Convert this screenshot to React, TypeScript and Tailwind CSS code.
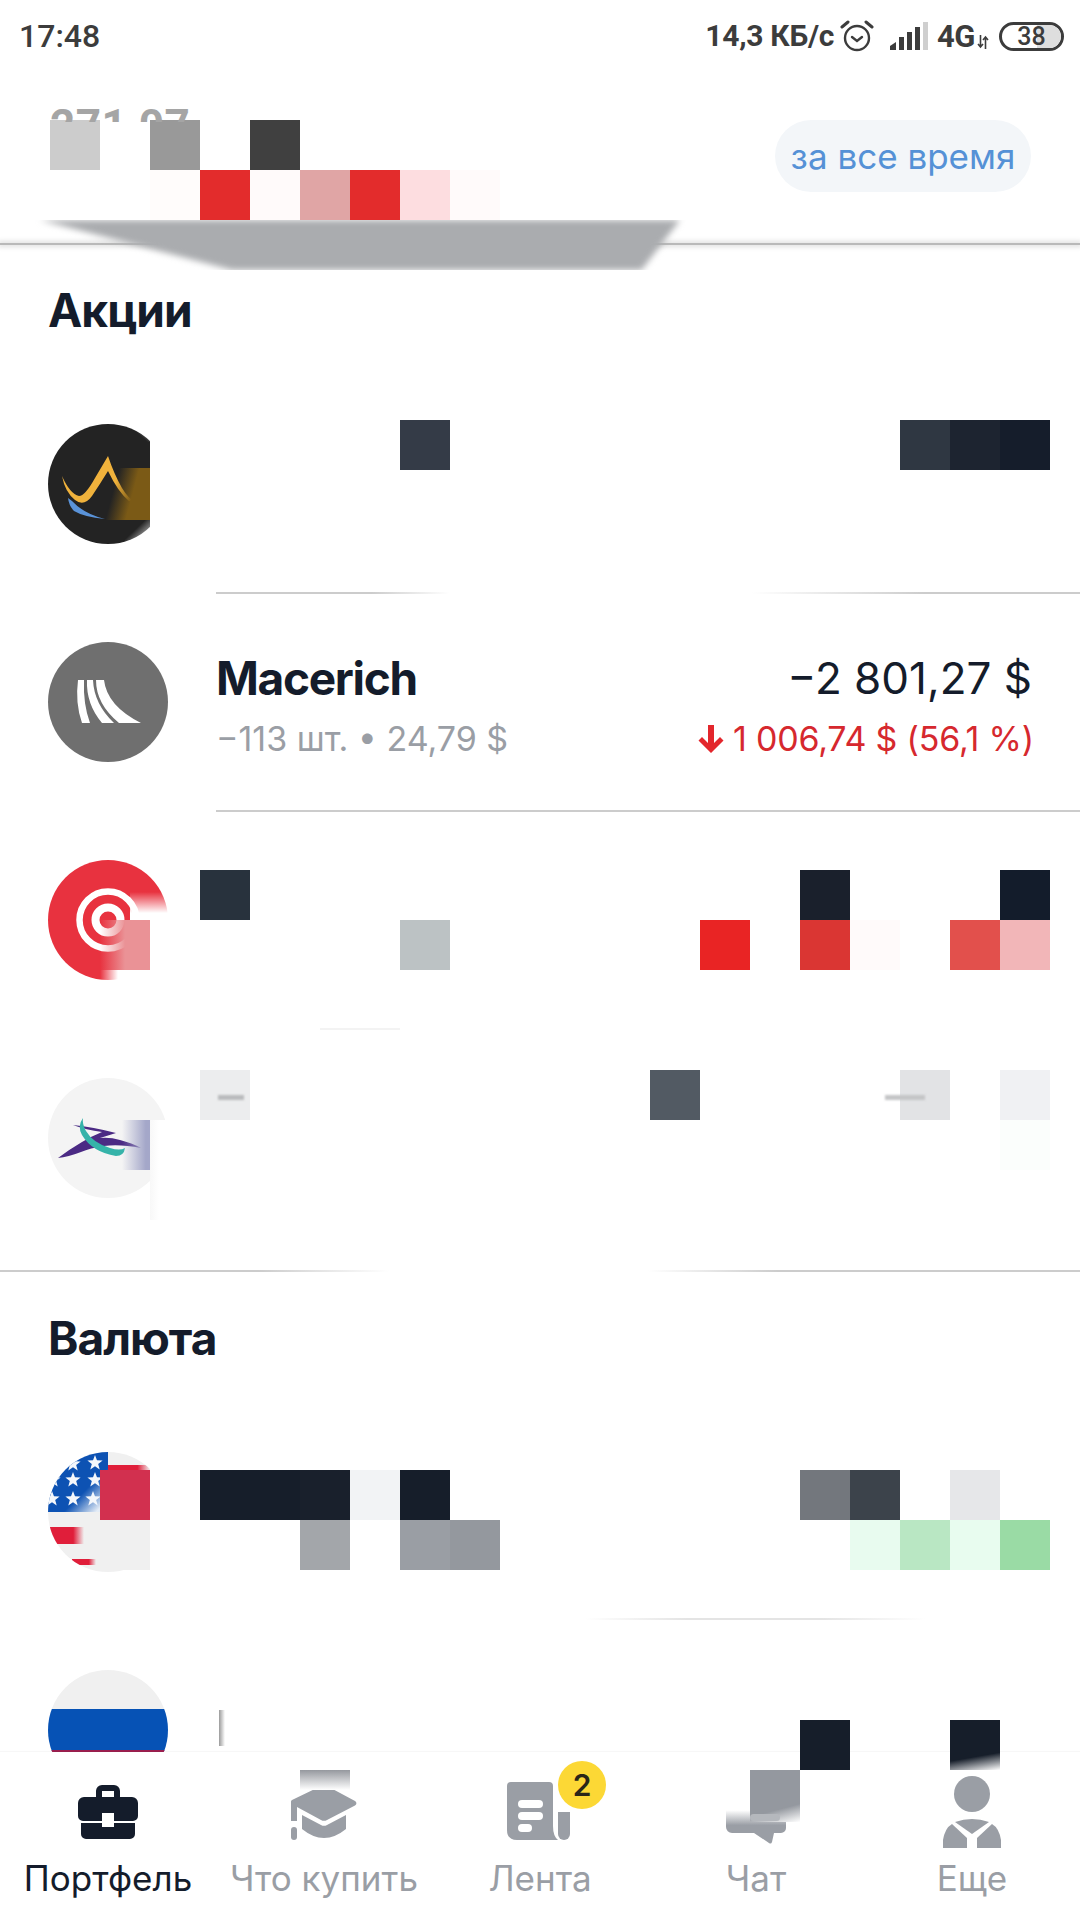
import React from "react";

type Block = [number, number, string];

const blocks: Block[] = [
  [50, 120, "#cccccc"], [150, 120, "#999999"], [250, 120, "#404040"],
  [150, 170, "#fffcfb"], [200, 170, "#e32c2c"], [250, 170, "#fffafa"], [300, 170, "#e0a5a5"], [350, 170, "#e32c2c"], [400, 170, "#fddde0"], [450, 170, "#fffafa"],
  [400, 420, "#343b47"], [900, 420, "#2f3742"], [950, 420, "#1d2430"], [1000, 420, "#151d2b"],
  [200, 870, "#28323d"], [800, 870, "#1a202c"], [1000, 870, "#131c2b"],
  [400, 920, "#bcc2c4"], [700, 920, "#e92424"], [800, 920, "#da3633"], [850, 920, "#fffafa"], [950, 920, "#e2504c"], [1000, 920, "#f2b6b8"],
  [650, 1070, "#525a63"], [900, 1070, "#e2e3e5"], [1000, 1070, "#f0f1f3"], [200, 1070, "#ecedee"],
  [1000, 1120, "#fbfefc"],
  [200, 1470, "#161e2a"], [250, 1470, "#161e2a"], [300, 1470, "#19202c"], [350, 1470, "#f2f3f5"], [400, 1470, "#161e2a"],
  [800, 1470, "#73777d"], [850, 1470, "#3c434b"], [950, 1470, "#e6e7e9"],
  [300, 1520, "#a3a6aa"], [400, 1520, "#9a9ea4"], [450, 1520, "#94989e"],
  [850, 1520, "#e8fbef"], [900, 1520, "#b9e7c3"], [950, 1520, "#e8fcef"], [1000, 1520, "#9adba5"],
  [800, 1720, "#161e2a"],
];

const star = (cx: number, cy: number, r: number) => {
  const pts: string[] = [];
  for (let i = 0; i < 10; i++) {
    const a = -Math.PI / 2 + (i * Math.PI) / 5;
    const rad = i % 2 === 0 ? r : r * 0.42;
    pts.push(`${cx + rad * Math.cos(a)},${cy + rad * Math.sin(a)}`);
  }
  return pts.join(" ");
};

const flagStars: [number, number][] = [[47, 11], [25, 12], [25, 28], [47, 28], [25, 47], [45, 47], [4, 47], [5, 28]];

function Avatar({ children }: { children: React.ReactNode }) {
  return (
    <svg viewBox="0 0 120 120" className="w-[120px] h-[120px] shrink-0">
      <defs>
        <clipPath id="round">
          <circle cx="60" cy="60" r="60" />
        </clipPath>
      </defs>
      <g clipPath="url(#round)">{children}</g>
    </svg>
  );
}

function Row({ avatar, divider, children }: { avatar: React.ReactNode; divider?: string; children?: React.ReactNode }) {
  return (
    <div className="relative h-[218px] shrink-0 flex items-center pl-[48px] pr-[48px] gap-[48px]">
      <Avatar>{avatar}</Avatar>
      {children}
      {divider && <div className={`absolute left-[216px] right-0 bottom-[-1px] h-[2px] ${divider}`} />}
    </div>
  );
}

function Heading({ children }: { children: React.ReactNode }) {
  return (
    <div className="h-[130px] shrink-0 pl-[48px] pt-[37px]">
      <h2 className="text-[46px] leading-[56px] font-bold text-[#141c2b] font-['Inter',sans-serif] tracking-[-1px]">{children}</h2>
    </div>
  );
}

function Tab({ label, active, children }: { label: string; active?: boolean; children: React.ReactNode }) {
  return (
    <div className="relative flex flex-col items-center">
      <div className="h-[78px] w-full relative">{children}</div>
      <span className={`text-[35px] leading-[44px] whitespace-nowrap font-['Inter',sans-serif] ${active ? "text-[#141c2b]" : "text-[#9a9ea5]"}`}>{label}</span>
    </div>
  );
}

export default function App() {
  return (
    <div className="relative w-[1080px] h-[1920px] bg-white overflow-hidden flex flex-col font-['Inter',sans-serif]">
      {/* Status bar */}
      <div className="h-[72px] shrink-0 flex items-center justify-between pl-[19px] pr-[16px] text-[#3c3c3c] font-['Roboto',sans-serif]">
        <span className="text-[32px] font-medium leading-none">17:48</span>
        <div className="flex items-center">
          <span className="text-[30px] font-bold leading-none tracking-[-0.3px]">14,3 КБ/с</span>
          <svg viewBox="0 0 34 34" className="w-[34px] h-[34px] ml-[6px]" fill="none" stroke="#3c3c3c" strokeWidth="2.4">
            <circle cx="17" cy="19" r="12" />
            <path d="M12 18l5 4 5-4" strokeLinecap="round" />
            <path d="M2 8l6-5M32 8l-6-5" strokeLinecap="round" strokeWidth="3" />
          </svg>
          <svg viewBox="0 0 40 28" className="w-[40px] h-[28px] ml-[15px]">
            <path d="M1 28v-4l6-4v8z" fill="#3c3c3c" />
            <rect x="10" y="15" width="5" height="13" fill="#3c3c3c" />
            <rect x="18" y="10" width="5" height="18" fill="#3c3c3c" />
            <rect x="26" y="5" width="5" height="23" fill="#3c3c3c" />
            <rect x="34" y="0" width="5" height="28" fill="#cfcfcf" />
          </svg>
          <span className="text-[31px] font-bold leading-none ml-[8px] tracking-[-0.5px]">4G</span>
          <svg viewBox="0 0 12 14" className="w-[12px] h-[14px] ml-[2px] mt-[12px]" fill="none" stroke="#3c3c3c" strokeWidth="1.6">
            <path d="M3.5 0v12M1 9l2.5 3L6 9M8.5 14V2M6 5l2.5-3L11 5" />
          </svg>
          <div className="relative ml-[10px] w-[65px] h-[29px] rounded-full border-[3px] border-[#3c3c3c] flex items-center justify-center overflow-hidden">
            <div className="absolute right-0 top-0 bottom-0 w-[24px] bg-[#dedede] rounded-r-full" />
            <span className="relative text-[25px] font-medium leading-none">38</span>
          </div>
        </div>
      </div>

      {/* Header */}
      <div className="h-[171px] shrink-0 flex items-start justify-end pr-[49px] pt-[48px]">
        <div className="h-[72px] w-[256px] rounded-full bg-[#f3f6f9] flex items-center justify-center text-[35px] text-[#5591d6] leading-none">за все время</div>
      </div>
      <div className="h-[2px] shrink-0 bg-[#b9b9b9] shadow-[0_0_5px_2px_rgba(0,0,0,0.12)]" />

      {/* List */}
      <div className="flex-1 min-h-0 overflow-hidden flex flex-col">
        <Heading>Акции</Heading>
        <Row
          divider="bg-[linear-gradient(90deg,#cccccc_0,#cccccc_18%,#ffffff_27%,#ffffff_62%,#cccccc_82%)]"
          avatar={
            <>
              <rect width="120" height="120" fill="#232323" />
              <path d="M14 52Q22 70 31 72Q37 72 47 54L60 32Q66 50 74 64Q80 74 87 78L81 77Q70 68 60 47Q52 60 44 72Q36 83 27 76Q17 68 14 52Z" fill="#f0b23c" />
              <path d="M20 74L24 77Q36 90 57 95Q36 93 26 87Q21 82 20 74Z" fill="#5a93d9" />
            </>
          }
        />
        <Row
          divider="bg-[#cccccc]"
          avatar={
            <>
              <rect width="120" height="120" fill="#6f6f6f" />
              <path d="M30 38h6q-1 24 6 43H34q-7-20-4-43z" fill="#fff" />
              <path d="M39 38h6q1 24 21 43H54Q38 62 39 38z" fill="#fff" />
              <path d="M48 38h8q3 26 37 43H71Q48 62 48 38z" fill="#fff" />
            </>
          }
        >
          <div className="flex-1 flex justify-between items-start pt-[8px]">
            <div className="flex flex-col">
              <span className="text-[46px] leading-[56px] font-bold text-[#141c2b] tracking-[-1.3px]">Macerich</span>
              <span className="text-[34px] leading-[48px] mt-[9px] text-[#9a9ea5]">−113 шт. • 24,79 $</span>
            </div>
            <div className="flex flex-col items-end">
              <span className="text-[44px] leading-[56px] text-[#141c2b]">−2 801,27 $</span>
              <span className="flex items-center text-[34px] leading-[48px] mt-[9px] text-[#d6282e] tracking-[-0.2px] mr-[-2px]">
                <svg viewBox="0 0 26 30" className="w-[26px] h-[30px] mr-[9px]">
                  <path d="M10 1h6v18l6-6 3.500 3.500L13 29 .5 16.500 4 13l6 6z" fill="#e3262c" />
                </svg>
                1 006,74 $ (56,1 %)
              </span>
            </div>
          </div>
        </Row>
        <Row
          avatar={
            <>
              <rect width="120" height="120" fill="#e8323f" />
              <circle cx="60" cy="60" r="28.500" fill="none" stroke="#fff" strokeWidth="6.500" />
              <circle cx="60" cy="60" r="12.500" fill="none" stroke="#fff" strokeWidth="8" />
            </>
          }
        />
        <Row
          avatar={
            <>
              <rect width="120" height="120" fill="#f4f4f4" />
              <path d="M25 47Q45 49 68 55L52 60Q62 59 72 62Q84 65 93 70Q72 66 56 68Q42 70 33 74Q20 79 10 80Q22 71 34 64Q44 58 54 54Q38 52 25 47Z" fill="#4b2a84" />
              <path d="M35 40Q29 48 34 57Q44 74 68 78Q76 78 77 70Q72 73 62 70Q45 65 38 53Q34 46 35 40Z" fill="#35b3a9" />
            </>
          }
        />
        <div className="h-[23px] shrink-0" />
        <div className="h-[2px] mb-[1px] shrink-0 bg-[linear-gradient(90deg,#cccccc_0,#cccccc_24%,#ffffff_36%,#ffffff_60%,#cccccc_72%)]" />
        <Heading>Валюта</Heading>
        <Row
          avatar={
            <>
              <defs>
                <linearGradient id="cantonFade" x1="0.3" y1="0.3" x2="0.9" y2="0.9">
                  <stop offset="0.55" stopColor="#0d52b3" />
                  <stop offset="1" stopColor="#e4ecf6" />
                </linearGradient>
                <linearGradient id="stripeFade" x1="0" y1="0" x2="1" y2="0">
                  <stop offset="0" stopColor="#e01e3a" />
                  <stop offset="0.7" stopColor="#e01e3a" />
                  <stop offset="1" stopColor="#f0f0f0" />
                </linearGradient>
              </defs>
              <rect width="120" height="120" fill="#f0f0f0" />
              <rect x="60" y="13" width="42" height="10" fill="url(#stripeFade)" />
              <rect x="0" y="0" width="60" height="60" fill="url(#cantonFade)" />
              {flagStars.map(([x, y], i) => (
                <polygon key={i} points={star(x, y, 8)} fill="#f4f7fb" />
              ))}
              <rect x="0" y="75" width="36" height="17" fill="url(#stripeFade)" />
              <rect x="24" y="107" width="24" height="6" fill="url(#stripeFade)" />
            </>
          }
        />
        <Row
          avatar={
            <>
              <rect width="120" height="40" fill="#f0f0f0" />
              <rect y="39" width="120" height="42" fill="#0652b5" />
              <rect y="80" width="120" height="40" fill="#9c1f50" />
            </>
          }
        />
      </div>

      {/* Tab bar */}
      <nav className="relative h-[168px] shrink-0 bg-white grid grid-cols-5 pt-[26px] shadow-[0_-1px_1px_rgba(0,0,0,0.03)]">
        <Tab label="Портфель" active>
          <svg viewBox="0 0 60 54" className="absolute left-[78px] top-[7px] w-[60px] h-[54px]" fill="#141c2b">
            <path fillRule="evenodd" d="M18 12V6a6 6 0 0 1 6-6h12a6 6 0 0 1 6 6v6h12a6 6 0 0 1 6 6v13a5 5 0 0 1-5 5H36v-8H24v8H5a5 5 0 0 1-5-5V18a6 6 0 0 1 6-6zm6-6v6h12V6z" />
            <path d="M3 38h21v4h12v-4h21v11a5 5 0 0 1-5 5H8a5 5 0 0 1-5-5z" />
          </svg>
        </Tab>
        <Tab label="Что купить">
          <svg viewBox="0 0 68 56" className="absolute left-[74px] top-[7px] w-[68px] h-[56px]" fill="#9a9ea5">
            <path d="M31 1a6 6 0 0 1 6 0l28 15a2.500 2.500 0 0 1 0 4.500L37 35a6 6 0 0 1-6 0L7 22v14H1V17a2 2 0 0 1 1-2z" />
            <path d="M12 30l19 10a6 6 0 0 0 6 0l19-10v14q-22 18-44 0z" />
            <rect x="1" y="42" width="6" height="13" rx="3" />
          </svg>
        </Tab>
        <Tab label="Лента">
          <svg viewBox="0 0 64 58" className="absolute left-[75px] top-[4px] w-[64px] h-[58px]" fill="#9a9ea5">
            <path d="M4 0h38a4 4 0 0 1 4 4v40q0 10 5 14H10Q0 58 0 48V4a4 4 0 0 1 4-4z" />
            <rect x="11" y="18" width="25" height="8" rx="4" fill="#fff" />
            <rect x="11" y="30" width="25" height="8" rx="4" fill="#fff" />
            <rect x="11" y="42" width="14" height="8" rx="4" fill="#fff" />
            <path d="M51 30h12v22a6 6 0 0 1-12 0z" />
          </svg>
          <div className="absolute left-[126px] top-[-17px] w-[48px] h-[48px] rounded-full bg-[#fcd835] flex items-center justify-center text-[30px] font-semibold text-[#2a2618]">2</div>
        </Tab>
        <Tab label="Чат">
          <svg viewBox="0 0 62 54" className="absolute left-[78px] top-[12px] w-[62px] h-[54px]">
            <defs>
              <linearGradient id="chatfade" x1="0" y1="0" x2="0" y2="1">
                <stop offset="0.38" stopColor="#ffffff" />
                <stop offset="0.66" stopColor="#9a9ea5" />
              </linearGradient>
            </defs>
            <path d="M0 0h60v38a5 5 0 0 1-5 5h-7l-2 9a2 2 0 0 1-3 1L28 43H6a6 6 0 0 1-6-6z" fill="url(#chatfade)" />
          </svg>
        </Tab>
        <Tab label="Еще">
          <svg viewBox="0 0 58 72" className="absolute left-[79px] top-[-2px] w-[58px] h-[72px]" fill="#9a9ea5">
            <circle cx="29" cy="18" r="18" />
            <path d="M12 46q17-6 34 0L29 58z" />
            <path d="M0 72V64Q2 52 9 48L24 62V72z" />
            <path d="M58 72V64Q56 52 49 48L34 62V72z" />
          </svg>
        </Tab>
      </nav>

      {/* Mosaic laid over the screenshot */}
      <div className="absolute inset-0 pointer-events-none">
        {blocks.map(([x, y, c], i) => (
          <div key={i} className="absolute w-[50px] h-[50px]" style={{ left: x, top: y, background: c }} />
        ))}
        <div className="absolute left-[50px] top-[104px] w-[150px] h-[18px] overflow-hidden text-[44px] leading-[44px] font-bold text-[#a5a5a5] whitespace-nowrap font-['Roboto',sans-serif] tracking-[0.5px]">271 07</div>

        {/* grey smear across the divider */}
        <div className="absolute left-[30px] top-[220px] w-[660px] h-[50px] overflow-hidden">
          <div className="w-full h-[70px] blur-[3px]">
            <div className="absolute left-[10px] top-0 w-[640px] h-[50px] bg-[#aaacaf] [clip-path:polygon(0_0,100%_0,94%_100%,30%_100%)]" />
          </div>
        </div>

        {/* faint remains of dividers */}
        <div className="absolute left-[320px] top-[1028px] w-[80px] h-[2px] bg-[#f3f3f3]" />
        <div className="absolute left-[585px] top-[1618px] w-[340px] h-[2px] bg-[linear-gradient(90deg,#ffffff,#e4e4e4_30%,#e4e4e4_70%,#ffffff)]" />
        <div className="absolute left-[218px] top-[1095px] w-[26px] h-[5px] bg-[#b9bbbd] blur-[1px]" />
        <div className="absolute left-[885px] top-[1095px] w-[40px] h-[5px] bg-[#c4c5c7] blur-[1px]" />

        {/* avatar masks */}
        <div className="absolute left-[150px] top-[420px] w-[30px] h-[130px] bg-white" />
        <div className="absolute left-[100px] top-[468px] w-[50px] h-[52px] bg-[linear-gradient(105deg,transparent_30%,#7b5a16_62%)]" />
        <div className="absolute left-[125px] top-[420px] w-[25px] h-[22px] bg-[linear-gradient(to_top_right,transparent_45%,#ffffff)]" />
        <div className="absolute left-[125px] top-[520px] w-[25px] h-[24px] bg-[linear-gradient(to_bottom_right,transparent_40%,#ffffff)]" />

        <div className="absolute left-[100px] top-[920px] w-[50px] h-[50px] bg-[linear-gradient(90deg,transparent,#ea9296_50%)]" />
        <div className="absolute left-[130px] top-[892px] w-[45px] h-[28px] bg-[linear-gradient(to_bottom,transparent,#ffffff_75%)]" />
        <div className="absolute left-[150px] top-[920px] w-[30px] h-[70px] bg-white" />
        <div className="absolute left-[100px] top-[970px] w-[60px] h-[14px] bg-[linear-gradient(90deg,transparent,#ffffff_30%)]" />

        <div className="absolute left-[122px] top-[1120px] w-[28px] h-[50px] bg-[linear-gradient(90deg,transparent,#a4a7c9_85%)]" />
        <div className="absolute left-[150px] top-[1120px] w-[30px] h-[100px] bg-[linear-gradient(90deg,#f8f8f8,#ffffff_30%)]" />

        <div className="absolute left-[100px] top-[1470px] w-[50px] h-[50px] bg-[#d2304f]" />
        <div className="absolute left-[100px] top-[1520px] w-[50px] h-[50px] bg-[#f0f0f0]" />
        <div className="absolute left-[150px] top-[1445px] w-[30px] h-[130px] bg-white" />

        {/* faded blocks around the tab bar */}
        <div className="absolute left-[950px] top-[1720px] w-[50px] h-[50px] bg-[linear-gradient(170deg,#161e2a_70%,#ffffff)]" />
        <div className="absolute left-[750px] top-[1770px] w-[50px] h-[52px] bg-[linear-gradient(165deg,#94989f_72%,#ffffff)]" />
        <div className="absolute left-[750px] top-[1814px] w-[30px] h-[7px] rounded-full bg-[#b5b8bd]" />
        <div className="absolute left-[300px] top-[1770px] w-[50px] h-[20px] bg-[linear-gradient(180deg,#95989e,#ffffff)]" />
        <div className="absolute left-[219px] top-[1710px] w-[6px] h-[36px] bg-[linear-gradient(90deg,#9a9a9a,#ffffff)]" />
      </div>
    </div>
  );
}
